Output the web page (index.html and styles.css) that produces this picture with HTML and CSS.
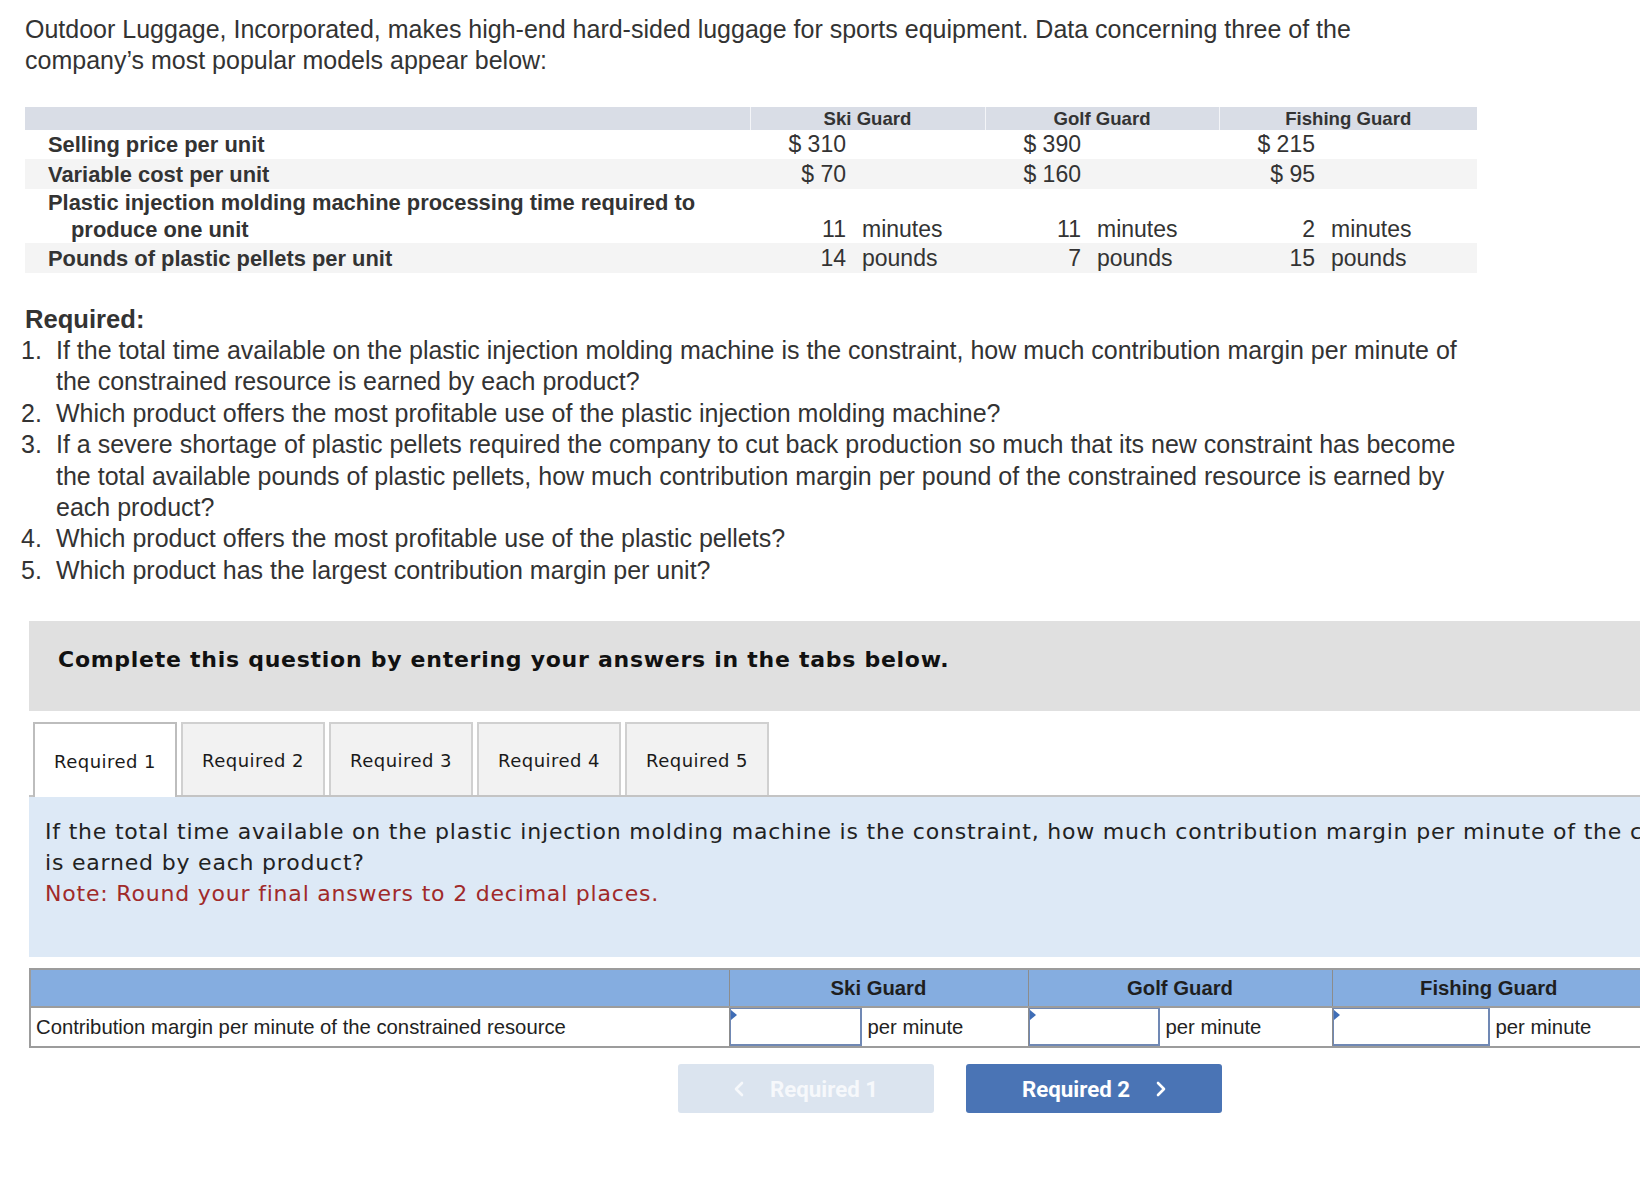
FILE: index.html
```html
<!DOCTYPE html>
<html lang="en">
<head>
<meta charset="utf-8">
<title>Outdoor Luggage</title>
<link rel="stylesheet" href="styles.css">
</head>
<body>
<div class="problem">
  <p class="intro">Outdoor Luggage, Incorporated, makes high-end hard-sided luggage for sports equipment. Data concerning three of the company’s most popular models appear below:</p>

  <table class="data">
    <colgroup>
      <col class="c-label"><col class="c-ski"><col class="c-golf"><col class="c-fish">
    </colgroup>
    <thead>
      <tr><th></th><th>Ski Guard</th><th>Golf Guard</th><th>Fishing Guard</th></tr>
    </thead>
    <tbody>
      <tr class="r1">
        <td class="lbl">Selling price per unit</td>
        <td><div class="val"><span class="num">$ 310</span><span class="unit"></span></div></td>
        <td><div class="val"><span class="num">$ 390</span><span class="unit"></span></div></td>
        <td><div class="val"><span class="num">$ 215</span><span class="unit"></span></div></td>
      </tr>
      <tr class="r2 alt">
        <td class="lbl">Variable cost per unit</td>
        <td><div class="val"><span class="num">$ 70</span><span class="unit"></span></div></td>
        <td><div class="val"><span class="num">$ 160</span><span class="unit"></span></div></td>
        <td><div class="val"><span class="num">$ 95</span><span class="unit"></span></div></td>
      </tr>
      <tr class="r3">
        <td class="lbl">Plastic injection molding machine processing time required to produce one unit</td>
        <td class="bottom"><div class="val"><span class="num">11</span><span class="unit">minutes</span></div></td>
        <td class="bottom"><div class="val"><span class="num">11</span><span class="unit">minutes</span></div></td>
        <td class="bottom"><div class="val"><span class="num">2</span><span class="unit">minutes</span></div></td>
      </tr>
      <tr class="r4 alt">
        <td class="lbl">Pounds of plastic pellets per unit</td>
        <td><div class="val"><span class="num">14</span><span class="unit">pounds</span></div></td>
        <td><div class="val"><span class="num">7</span><span class="unit">pounds</span></div></td>
        <td><div class="val"><span class="num">15</span><span class="unit">pounds</span></div></td>
      </tr>
    </tbody>
  </table>

  <h3 class="req-title">Required:</h3>
  <ol class="req-list">
    <li><span class="n">1.</span><span class="t">If the total time available on the plastic injection molding machine is the constraint, how much contribution margin per minute of the constrained resource is earned by each product?</span></li>
    <li><span class="n">2.</span><span class="t">Which product offers the most profitable use of the plastic injection molding machine?</span></li>
    <li><span class="n">3.</span><span class="t">If a severe shortage of plastic pellets required the company to cut back production so much that its new constraint has become the total available pounds of plastic pellets, how much contribution margin per pound of the constrained resource is earned by each product?</span></li>
    <li><span class="n">4.</span><span class="t">Which product offers the most profitable use of the plastic pellets?</span></li>
    <li><span class="n">5.</span><span class="t">Which product has the largest contribution margin per unit?</span></li>
  </ol>
</div>

<div class="question">
  <div class="instr">Complete this question by entering your answers in the tabs below.</div>

  <div class="tabs">
    <div class="tab active">Required 1</div>
    <div class="tab">Required 2</div>
    <div class="tab">Required 3</div>
    <div class="tab">Required 4</div>
    <div class="tab">Required 5</div>
  </div>

  <div class="panel">
    <p class="ask">If the total time available on the plastic injection molding machine is the constraint, how much contribution margin per minute of the constrained resource<br>is earned by each product?</p>
    <p class="note">Note: Round your final answers to 2 decimal places.</p>
  </div>

  <table class="answer">
    <colgroup>
      <col class="a-label"><col class="a-ski"><col class="a-golf"><col class="a-fish">
    </colgroup>
    <thead>
      <tr><th></th><th>Ski Guard</th><th>Golf Guard</th><th>Fishing Guard</th></tr>
    </thead>
    <tbody>
      <tr>
        <td class="a-lbl">Contribution margin per minute of the constrained resource</td>
        <td><div class="cell"><span class="inp w-ski"></span><span class="per">per minute</span></div></td>
        <td><div class="cell"><span class="inp w-golf"></span><span class="per">per minute</span></div></td>
        <td><div class="cell"><span class="inp w-fish"></span><span class="per">per minute</span></div></td>
      </tr>
    </tbody>
  </table>

  <div class="nav">
    <button class="btn prev" disabled>
      <svg class="chev" viewBox="0 0 10 16" width="10" height="16"><path d="M8 2 L2 8 L8 14" fill="none" stroke="currentColor" stroke-width="2.6" stroke-linecap="round" stroke-linejoin="round"/></svg>
      <span>Required 1</span>
    </button>
    <button class="btn next">
      <span>Required 2</span>
      <svg class="chev" viewBox="0 0 10 16" width="10" height="16"><path d="M2 2 L8 8 L2 14" fill="none" stroke="currentColor" stroke-width="2.6" stroke-linecap="round" stroke-linejoin="round"/></svg>
    </button>
  </div>
</div>
</body>
</html>
```

FILE: styles.css
```css
html {
  overflow-x: hidden;
}

body {
  margin: 0;
  background: #ffffff;
  color: #333333;
  font-family: "Liberation Sans", Arial, Helvetica, sans-serif;
}

/* ---------- problem statement ---------- */
.problem {
  padding: 14px 0 0 25px;
  width: 1452px;
}

.intro {
  margin: 0;
  width: 1420px;
  font-size: 25px;
  line-height: 31px;
}

.data {
  margin-top: 31px;
  width: 1452px;
  table-layout: fixed;
  border-collapse: collapse;
  border-spacing: 0;
}

.c-label { width: 725px; }
.c-ski { width: 235px; }
.c-golf { width: 234px; }
.c-fish { width: 258px; }

.data th {
  height: 23px;
  padding: 0;
  background: #d9dde6;
  font-size: 18.6px;
  font-weight: bold;
  line-height: 23px;
  text-align: center;
  color: #333333;
}

.data th + th {
  border-left: 1px solid #f4f5f8;
}

.data td {
  padding: 0;
  vertical-align: middle;
}

.data .alt td {
  background: #f4f4f4;
}

.data .r1 { height: 29px; }
.data .r2 { height: 30px; }
.data .r3 { height: 53px; }
.data .r4 { height: 30px; }

.data .lbl {
  padding-left: 46px;
  text-indent: -23px;
  font-size: 21.9px;
  font-weight: bold;
  line-height: 27px;
}

.data td.bottom {
  vertical-align: bottom;
}

.val {
  display: grid;
  grid-template-columns: 96px 1fr;
  column-gap: 16px;
  font-size: 23px;
  line-height: 27px;
}

.num {
  text-align: right;
}

.req-title {
  margin: 31px 0 0;
  font-size: 25.6px;
  font-weight: bold;
  line-height: 31px;
}

.req-list {
  margin: 0 0 0 -4px;
  padding: 0;
  list-style: none;
  width: 1444px;
  font-size: 25px;
  line-height: 31.4px;
}

.req-list li {
  display: flex;
}

.req-list .n {
  flex: 0 0 35px;
}

.req-list .t {
  flex: 1;
}

/* ---------- question area ---------- */
.question {
  margin: 35px 0 0 29px;
  width: 1842px;
  font-family: "DejaVu Sans", Verdana, sans-serif;
}

.instr {
  height: 90px;
  box-sizing: border-box;
  padding: 24px 0 0 29px;
  background: #e0e0e0;
  color: #111111;
  font-size: 22px;
  font-weight: bold;
  letter-spacing: 0.73px;
  line-height: 30px;
}

.tabs {
  display: flex;
  gap: 4px;
  margin-top: 11px;
  padding-left: 4px;
  border-bottom: 2px solid #c4c4c4;
}

.tab {
  width: 144px;
  height: 73px;
  box-sizing: border-box;
  display: flex;
  align-items: center;
  justify-content: center;
  padding-top: 2px;
  border: 2px solid #d0d0d0;
  border-bottom: none;
  background: #f2f2f2;
  color: #1a1a1a;
  font-size: 18px;
  letter-spacing: 0.45px;
}

.tab.active {
  height: 75px;
  margin-bottom: -2px;
  background: #ffffff;
  border-color: #bdbdbd;
}

.panel {
  height: 160px;
  box-sizing: border-box;
  padding: 19px 0 0 16px;
  background: #dde9f6;
  font-size: 22px;
  letter-spacing: 0.8px;
  line-height: 31px;
  color: #222222;
}

.panel p {
  margin: 0;
}

.ask {
  white-space: nowrap;
}

.note {
  color: #a02a2a;
}

/* ---------- answer table ---------- */
.answer {
  margin-top: 11px;
  width: 1616px;
  table-layout: fixed;
  border-collapse: collapse;
  border: 2px solid #9c9c9c;
  font-family: "Liberation Sans", Arial, Helvetica, sans-serif;
}

.a-label { width: 699px; }
.a-ski { width: 299px; }
.a-golf { width: 304px; }
.a-fish { width: 314px; }

.answer th {
  height: 36px;
  padding: 0;
  background: #85ade0;
  border-left: 1px solid #8c8c8c;
  color: #1f1f1f;
  font-size: 20.3px;
  font-weight: bold;
  text-align: center;
}

.answer th:first-child {
  border-left: none;
}

.answer td {
  height: 38px;
  padding: 0;
  border-top: 2px solid #9c9c9c;
  border-left: 1px solid #8c8c8c;
  background: #ffffff;
  color: #222222;
  font-size: 20.3px;
}

.answer td.a-lbl {
  border-left: none;
  padding-left: 5px;
}

.cell {
  display: flex;
  align-items: center;
  height: 38px;
}

.inp {
  position: relative;
  flex: 0 0 auto;
  height: 38px;
  box-sizing: border-box;
  border: 2px solid #7088b4;
  border-left-width: 1px;
  border-top-width: 1px;
  background: #ffffff;
}

.inp::before {
  content: "";
  position: absolute;
  left: 0;
  top: 1px;
  border-left: 6px solid #3f6db6;
  border-top: 5px solid transparent;
  border-bottom: 5px solid transparent;
}

.w-ski { width: 132px; }
.w-golf { width: 131px; }
.w-fish { width: 157px; }

.per {
  margin-left: 6px;
}

/* ---------- navigation ---------- */
.nav {
  display: flex;
  justify-content: center;
  gap: 32px;
  margin-top: 16px;
}

.btn {
  width: 256px;
  height: 49px;
  display: flex;
  align-items: center;
  justify-content: center;
  gap: 26px;
  border: none;
  border-radius: 3px;
  font-family: Roboto, "Open Sans", sans-serif;
  font-size: 22.3px;
  font-weight: bold;
  color: #ffffff;
}

.btn.prev {
  background: #dbe4ef;
  color: #f6f8fb;
}

.btn.next {
  background: #4a74b5;
}

.chev {
  display: block;
}
```
